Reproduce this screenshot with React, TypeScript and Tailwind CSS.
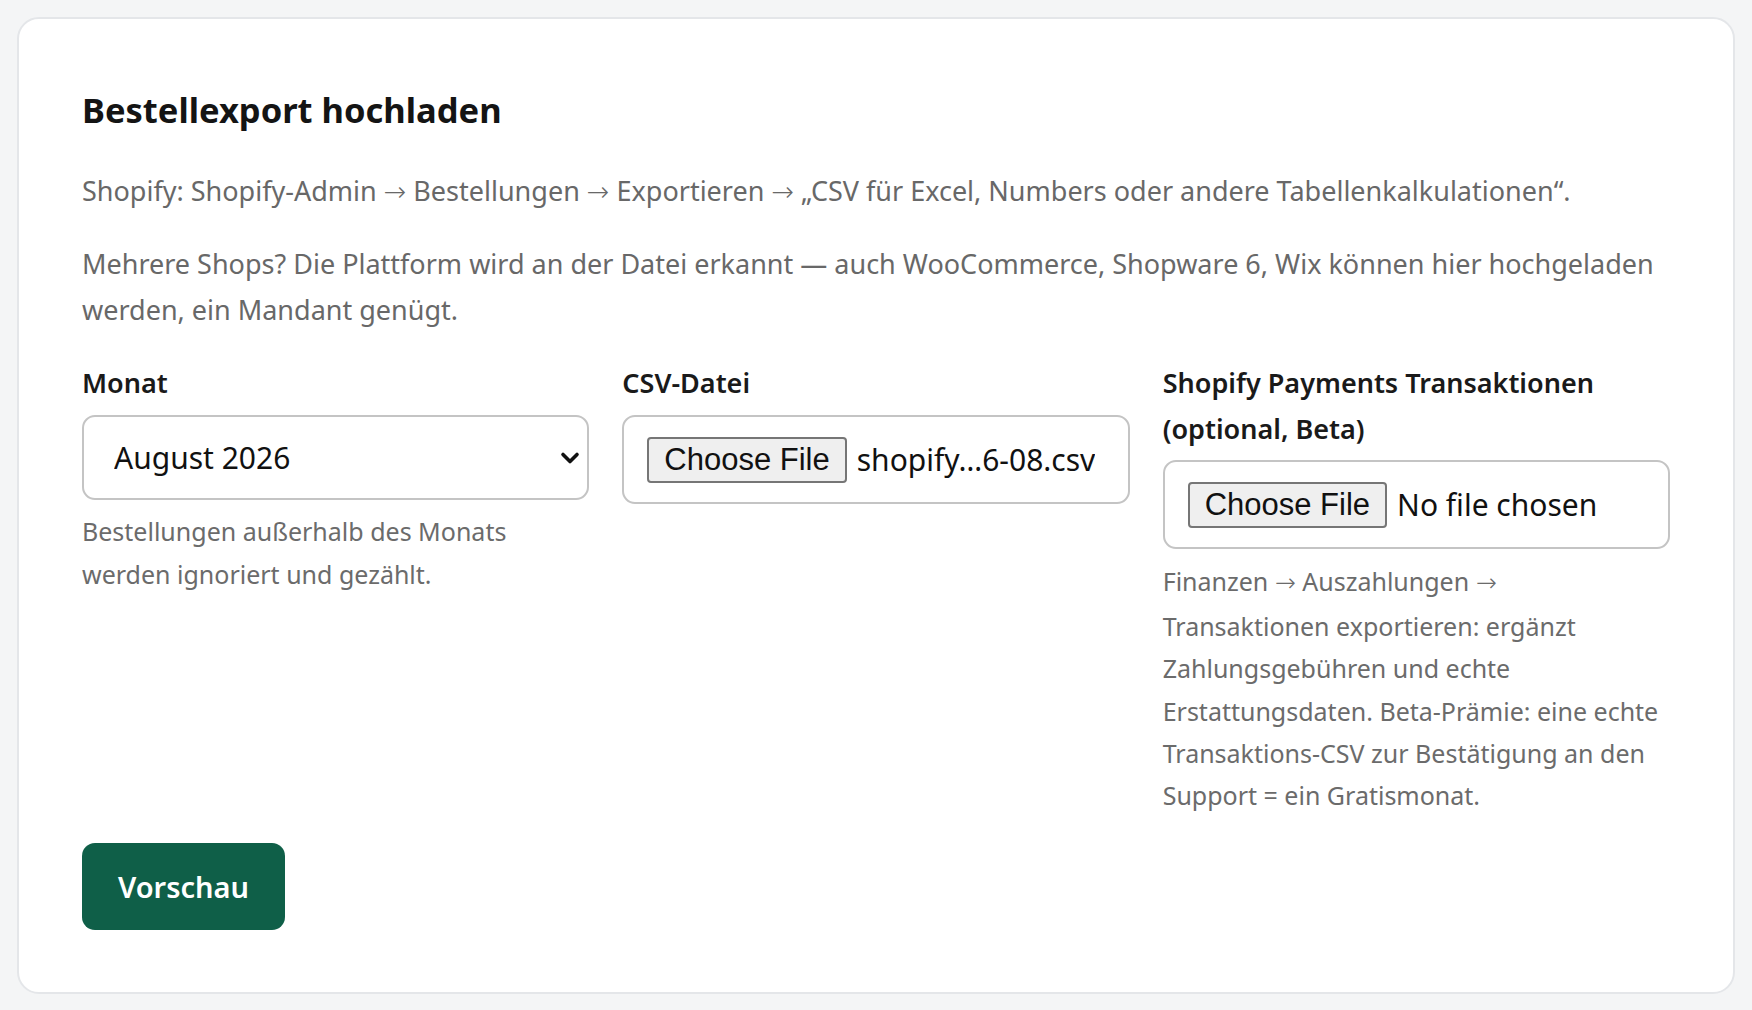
import React from 'react';

const Arrow: React.FC = () => <span className="font-['DejaVu_Sans',sans-serif] font-light">→</span>;

const FileField: React.FC<{ fileName: string }> = ({ fileName }) => (
  <div className="flex h-[89px] items-center rounded-[13px] border-2 border-[#c4c4c4] bg-white px-[23px]">
    <span className="flex h-[46px] items-center rounded-[4px] border-2 border-[#767676] bg-[#efefef] px-[15px] font-['Liberation_Sans',Arial,sans-serif] text-[31px] leading-none text-[#111]">
      Choose File
    </span>
    <span className="ml-[10px] truncate text-[30px] text-[#111]">{fileName}</span>
  </div>
);

const App: React.FC = () => {
  return (
    <div className="min-h-screen bg-[#f4f5f6] p-[17px] font-['Noto_Sans',sans-serif]">
      <div className="rounded-[22px] border-2 border-[#e4e6e9] bg-white px-[63px] pt-[70px] pb-[62px]">
        <h2 className="text-[34.5px] font-bold leading-[1.2] text-[#141414]">Bestellexport hochladen</h2>

        <p className="mt-[38px] text-[27px] leading-[46px] text-[#686868]">
          Shopify: Shopify-Admin <Arrow /> Bestellungen <Arrow /> Exportieren <Arrow /> „CSV für Excel, Numbers oder andere Tabellenkalkulationen“.
        </p>
        <p className="mt-[26px] text-[27px] leading-[46px] text-[#686868]">
          Mehrere Shops? Die Plattform wird an der Datei erkannt — auch WooCommerce, Shopware 6, Wix können hier hochgeladen werden, ein Mandant genügt.
        </p>

        <div className="mt-[27px] grid grid-cols-3 gap-[33px]">
          {/* Monat */}
          <div>
            <label className="block text-[27px] font-semibold leading-[46px] text-[#1a1a1a]">Monat</label>
            <div className="relative mt-[9px]">
              <select
                defaultValue="2026-08"
                className="h-[85px] w-full appearance-none rounded-[13px] border-2 border-[#c4c4c4] bg-white pl-[30px] pr-[60px] text-[30px] text-[#111] outline-none"
              >
                <option value="2026-08">August 2026</option>
                <option value="2026-07">Juli 2026</option>
              </select>
              <svg
                className="pointer-events-none absolute right-[9px] top-1/2 h-[14px] w-[20px] -translate-y-1/2"
                viewBox="0 0 20 14"
                fill="none"
              >
                <path d="M3 3.5l7 7 7-7" stroke="#111" strokeWidth="3.6" strokeLinecap="round" strokeLinejoin="round" />
              </svg>
            </div>
            <p className="mt-[10px] text-[25px] leading-[42.4px] text-[#6b6b6b]">
              Bestellungen außerhalb des Monats werden ignoriert und gezählt.
            </p>
          </div>

          {/* CSV-Datei */}
          <div>
            <label className="block text-[27px] font-semibold leading-[46px] text-[#1a1a1a]">CSV-Datei</label>
            <div className="mt-[9px]">
              <FileField fileName="shopify…6-08.csv" />
            </div>
          </div>

          {/* Shopify Payments */}
          <div>
            <label className="block text-[27px] font-semibold leading-[46px] text-[#1a1a1a]">
              Shopify Payments Transaktionen (optional, Beta)
            </label>
            <div className="mt-[8px]">
              <FileField fileName="No file chosen" />
            </div>
            <p className="mt-[11px] text-[25px] leading-[42.4px] text-[#6b6b6b]">
              Finanzen <Arrow /> Auszahlungen <Arrow />
              <br />
              Transaktionen exportieren: ergänzt Zahlungsgebühren und echte Erstattungsdaten. Beta-Prämie: eine echte Transaktions-CSV zur Bestätigung an den Support = ein Gratismonat.
            </p>
          </div>
        </div>

        <button className="mt-[26px] h-[87px] rounded-[13px] bg-[#0f5f48] px-[36px] text-[29px] font-semibold text-white">
          Vorschau
        </button>
      </div>
    </div>
  );
};

export default App;
